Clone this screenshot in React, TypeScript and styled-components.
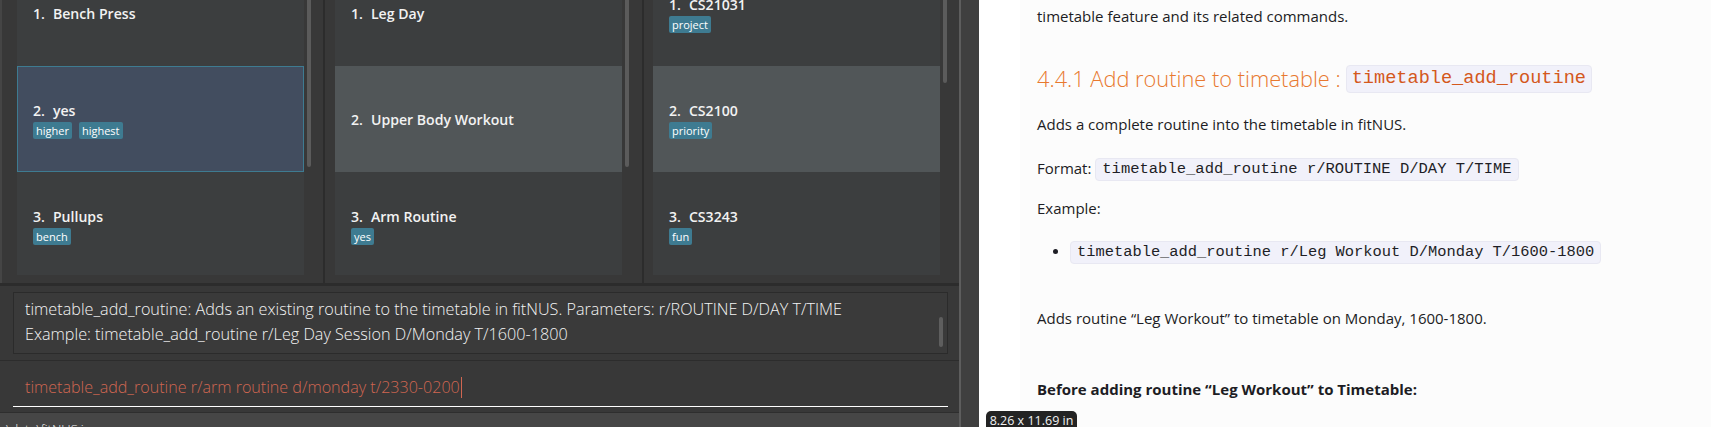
import React from "react";
import styled, { createGlobalStyle } from "styled-components";

const GlobalStyle = createGlobalStyle`
  html, body { margin: 0; padding: 0; background: #ffffff; }
  body { width: 1711px; height: 427px; overflow: hidden; }
  * { box-sizing: border-box; }
`;

const Screen = styled.div`
  display: flex;
  width: 1711px;
  height: 427px;
  overflow: hidden;
  font-family: "Open Sans", "Noto Sans", sans-serif;
`;

/* ---------- app window ---------- */
const AppWindow = styled.div`
  width: 959px;
  flex: none;
  display: flex;
  flex-direction: column;
  background: #383838;
  color: #ffffff;
`;

const ListsRow = styled.div`
  display: flex;
  height: 283px;
  flex: none;
  border-left: 2px solid #454545;
`;

const ColumnDivider = styled.div`
  width: 2px;
  flex: none;
  background: #2c2c2c;
`;

const Column = styled.div<{ $padLeft: number; $width: number }>`
  display: flex;
  align-items: flex-start;
  gap: 3px;
  width: ${(p) => p.$width}px;
  flex: none;
  padding-left: ${(p) => p.$padLeft}px;
`;

const ListViewport = styled.div`
  width: 287px;
  height: 275px;
  overflow: hidden;
  background: #3c3e3f;
`;

const ListInner = styled.div`
  margin-top: -40px;
`;

const ScrollThumb = styled.div<{ $h: number }>`
  width: 4px;
  height: ${(p) => p.$h}px;
  background: #5b5b5b;
  border-radius: 0 0 2px 2px;
`;

type CellKind = "even" | "odd" | "selected";

const Cell = styled.div<{ $kind: CellKind }>`
  height: 106px;
  display: flex;
  flex-direction: column;
  justify-content: center;
  padding-left: 15px;
  background: ${(p) =>
    p.$kind === "odd" ? "#515658" : p.$kind === "selected" ? "#424d5f" : "#3c3e3f"};
  border: 1px solid ${(p) => (p.$kind === "selected" ? "#3e7b91" : "transparent")};
`;

const TitleRow = styled.div`
  display: flex;
  align-items: center;
  height: 22px;
  font-size: 14.1px;
  font-weight: 600;
  color: #f2f2f2;
  white-space: nowrap;
`;

const IdLabel = styled.span`
  margin-right: 8px;
`;

const TagRow = styled.div`
  display: flex;
  gap: 7px;
`;

const Tag = styled.span`
  height: 17px;
  line-height: 15px;
  padding: 1px 3px;
  border-radius: 2px;
  background: #3e7b91;
  color: #ffffff;
  font-size: 11px;
  font-weight: 500;
`;

const HDivider = styled.div<{ $h: number }>`
  height: ${(p) => p.$h}px;
  flex: none;
  background: #2c2c2c;
`;

const ResultPane = styled.div`
  padding: 6px 11px 6px 13px;
`;

const ResultBox = styled.div`
  position: relative;
  height: 62px;
  border: 1px solid #2b2b2b;
  background: #3a3a3a;
  padding: 4px 11px 0 11px;
  font-family: "Open Sans", sans-serif;
  font-weight: 300;
  font-size: 16.2px;
  line-height: 25px;
  color: #f4f4f4;
  white-space: nowrap;
`;

const ResultThumb = styled.div`
  position: absolute;
  right: 4px;
  top: 24px;
  width: 4px;
  height: 30px;
  border-radius: 2px;
  background: #5e5e5e;
`;

const CommandPane = styled.div`
  padding: 12px 11px 5px 13px;
`;

const CommandField = styled.div`
  display: flex;
  align-items: center;
  height: 34px;
  padding: 0 0 5px 12px;
  border-bottom: 1.5px solid #ffffff;
  font-weight: 300;
  font-size: 16.1px;
  color: #d06651;
  white-space: nowrap;
`;

const Caret = styled.span`
  display: inline-block;
  width: 1px;
  height: 21px;
  margin-left: 1px;
  background: #d06651;
`;

const StatusBar = styled.div`
  flex: 1;
  border-top: 1px solid #2e2e2e;
  background: #464646;
  padding: 7px 0 0 6px;
  font-size: 13px;
  font-weight: 300;
  color: #f0f0f0;
  white-space: nowrap;
`;

/* ---------- window edge & viewer ---------- */
const WindowEdge = styled.div`
  width: 2px;
  flex: none;
  background: #5d5d5d;
`;

const ViewerGutter = styled.div`
  width: 18px;
  flex: none;
  background: #3f3f3f;
`;

const DocPage = styled.div`
  position: relative;
  flex: 1;
  background: linear-gradient(to right, #ffffff 0, #ffffff 41px, #fcfcfc 41px);
  padding: 4px 0 0 58px;
  color: #1d1d24;
  font-family: "Open Sans", "Noto Sans", sans-serif;
  font-size: 15px;
  line-height: 24px;
`;

const Para = styled.p<{ $mt: number; $bold?: boolean }>`
  margin: ${(p) => p.$mt}px 0 0 0;
  font-weight: ${(p) => (p.$bold ? 700 : 400)};
  white-space: nowrap;
`;

const Heading = styled.h4`
  margin: 33px 0 0 0;
  height: 36px;
  display: flex;
  align-items: center;
  font-size: 21.8px;
  font-weight: 300;
  color: #e8792f;
  white-space: nowrap;
`;

const Code = styled.code<{ $size: number; $orange?: boolean }>`
  display: inline-block;
  font-family: "Liberation Mono", "DejaVu Sans Mono", monospace;
  font-size: ${(p) => p.$size}px;
  line-height: ${(p) => (p.$orange ? 26 : 21)}px;
  padding: ${(p) => (p.$orange ? "0 5px" : "0 6px")};
  background: #f1f1fa;
  border: 1px solid #e8e8f2;
  border-radius: 4px;
  color: ${(p) => (p.$orange ? "#d4581c" : "#1e1e26")};
  vertical-align: middle;
`;

const HeadCodeWrap = styled.span`
  margin-left: 5px;
  display: inline-flex;
`;

const Bullets = styled.ul`
  margin: 18px 0 0 0;
  padding: 0 0 0 33px;
  list-style: disc;
  white-space: nowrap;
`;

const Tooltip = styled.div`
  position: absolute;
  left: 7px;
  top: 411px;
  width: 91px;
  height: 24px;
  border-radius: 5px;
  background: #232323;
  color: #f2f2f2;
  font-size: 12.5px;
  line-height: 20px;
  text-align: center;
`;

type Item = { id: number; name: string; tags: string[]; kind: CellKind };

const columns: { padLeft: number; width: number; thumb: number; items: Item[] }[] = [
  {
    padLeft: 15,
    width: 321,
    thumb: 167,
    items: [
      { id: 1, name: "Bench Press", tags: [], kind: "even" },
      { id: 2, name: "yes", tags: ["higher", "highest"], kind: "selected" },
      { id: 3, name: "Pullups", tags: ["bench"], kind: "even" },
    ],
  },
  {
    padLeft: 10,
    width: 317,
    thumb: 167,
    items: [
      { id: 1, name: "Leg Day", tags: [], kind: "even" },
      { id: 2, name: "Upper Body Workout", tags: [], kind: "odd" },
      { id: 3, name: "Arm Routine", tags: ["yes"], kind: "even" },
    ],
  },
  {
    padLeft: 9,
    width: 315,
    thumb: 83,
    items: [
      { id: 1, name: "CS21031", tags: ["project"], kind: "even" },
      { id: 2, name: "CS2100", tags: ["priority"], kind: "odd" },
      { id: 3, name: "CS3243", tags: ["fun"], kind: "even" },
    ],
  },
];

export default function App() {
  return (
    <>
      <GlobalStyle />
      <Screen>
        <AppWindow>
          <ListsRow>
            {columns.map((col, ci) => (
              <React.Fragment key={ci}>
                {ci > 0 && <ColumnDivider />}
                <Column $padLeft={col.padLeft} $width={col.width}>
                  <ListViewport>
                    <ListInner>
                      {col.items.map((it) => (
                        <Cell key={it.id} $kind={it.kind}>
                          <TitleRow>
                            <IdLabel>{it.id}.</IdLabel>
                            {it.name}
                          </TitleRow>
                          {it.tags.length > 0 && (
                            <TagRow>
                              {it.tags.map((t) => (
                                <Tag key={t}>{t}</Tag>
                              ))}
                            </TagRow>
                          )}
                        </Cell>
                      ))}
                    </ListInner>
                  </ListViewport>
                  <ScrollThumb $h={col.thumb} />
                </Column>
              </React.Fragment>
            ))}
          </ListsRow>
          <HDivider $h={3} />
          <ResultPane>
            <ResultBox>
              <div>
                timetable_add_routine: Adds an existing routine to the timetable in fitNUS. Parameters: r/ROUTINE D/DAY T/TIME
              </div>
              <div>Example: timetable_add_routine r/Leg Day Session D/Monday T/1600-1800</div>
              <ResultThumb />
            </ResultBox>
          </ResultPane>
          <HDivider $h={1} />
          <CommandPane>
            <CommandField>
              timetable_add_routine r/arm routine d/monday t/2330-0200
              <Caret />
            </CommandField>
          </CommandPane>
          <StatusBar>\data\fitNUS.json</StatusBar>
        </AppWindow>
        <WindowEdge />
        <ViewerGutter />
        <DocPage>
          <Para $mt={0}>timetable feature and its related commands.</Para>
          <Heading>
            4.4.1 Add routine to timetable :
            <HeadCodeWrap>
              <Code $size={18.6} $orange>
                timetable_add_routine
              </Code>
            </HeadCodeWrap>
          </Heading>
          <Para $mt={15}>Adds a complete routine into the timetable in fitNUS.</Para>
          <Para $mt={20}>
            Format: <Code $size={15.5}>timetable_add_routine r/ROUTINE D/DAY T/TIME</Code>
          </Para>
          <Para $mt={15}>Example:</Para>
          <Bullets>
            <li>
              <Code $size={15.4}>timetable_add_routine r/Leg Workout D/Monday T/1600-1800</Code>
            </li>
          </Bullets>
          <Para $mt={42}>Adds routine “Leg Workout” to timetable on Monday, 1600-1800.</Para>
          <Para $mt={47} $bold>
            Before adding routine “Leg Workout” to Timetable:
          </Para>
          <Tooltip>8.26 x 11.69 in</Tooltip>
        </DocPage>
      </Screen>
    </>
  );
}
